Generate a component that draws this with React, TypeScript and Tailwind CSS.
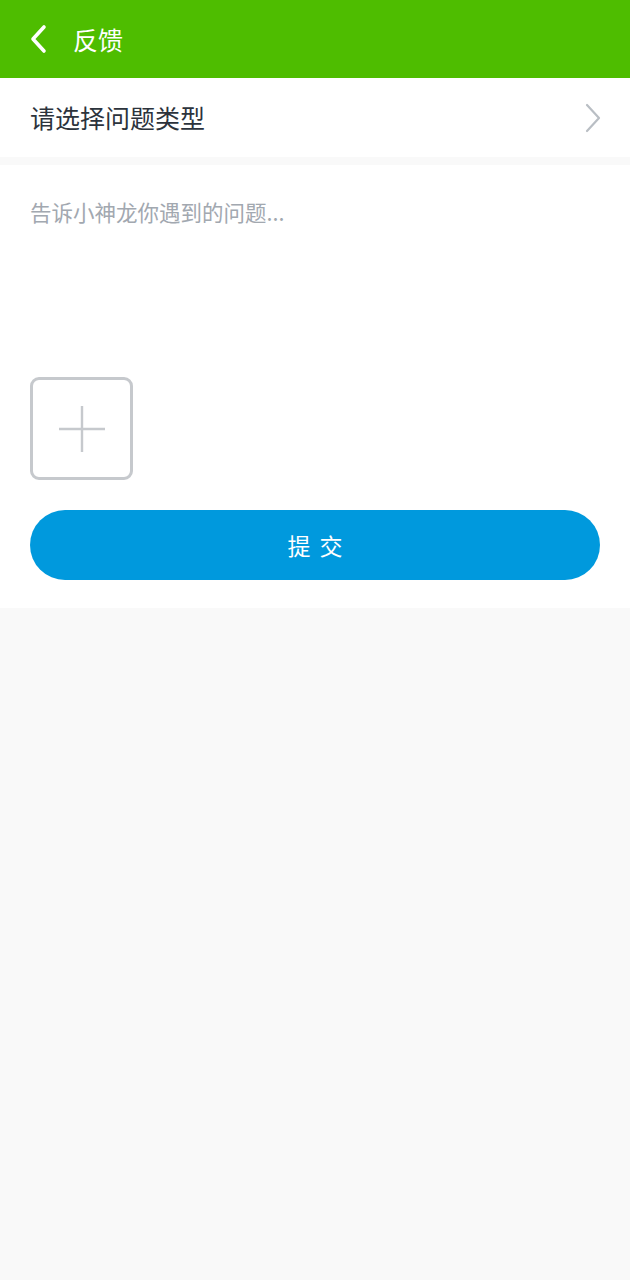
import { useState } from "react";

const FONT = { fontFamily: '"Noto Sans CJK SC", "Noto Sans", sans-serif' };

export default function App() {
  const [text, setText] = useState("");

  return (
    <div className="min-h-[1280px] w-[630px] bg-[#f9f9f9]" style={FONT}>
      {/* header */}
      <header className="flex h-[78px] items-center bg-[#4ebd00] pl-[28px]">
        <svg width="22" height="30" viewBox="0 0 22 30" fill="none">
          <path d="M16 3 L5 15 L16 27" stroke="white" strokeWidth="3.6" strokeLinecap="round" strokeLinejoin="round" />
        </svg>
        <h1 className="ml-[23px] text-[25px] leading-none text-white">反馈</h1>
      </header>

      {/* type picker */}
      <button type="button" className="flex h-[79px] w-full items-center justify-between bg-white pl-[30px] pr-[28px]">
        <span className="text-[25px] text-[#2c333c]">请选择问题类型</span>
        <svg width="18" height="30" viewBox="0 0 18 30" fill="none">
          <path d="M3 2 L15 15 L3 28" stroke="#b9bec4" strokeWidth="2.2" strokeLinecap="round" strokeLinejoin="round" />
        </svg>
      </button>

      {/* form */}
      <section className="mt-[8px] bg-white px-[30px] pb-[28px] pt-[30px]">
        <textarea
          value={text}
          onChange={(e) => setText(e.target.value)}
          placeholder="告诉小神龙你遇到的问题..."
          className="block h-[182px] w-full resize-none text-[21.5px] leading-[34px] text-[#2c333c] outline-none placeholder:text-[#a2a8b0]"
        />
        <button
          type="button"
          className="flex h-[103px] w-[103px] items-center justify-center rounded-[9px] border-[3px] border-[#c6c9cd]"
        >
          <svg width="50" height="50" viewBox="0 0 50 50">
            <path d="M25 2 V48 M2 25 H48" stroke="#c6c9cd" strokeWidth="2.4" />
          </svg>
        </button>
        <button
          type="button"
          className="mt-[30px] flex h-[70px] w-full items-center justify-center rounded-full bg-[#0099dd] pl-[9px] text-[23px] tracking-[9px] text-white"
        >
          提交
        </button>
      </section>
    </div>
  );
}
